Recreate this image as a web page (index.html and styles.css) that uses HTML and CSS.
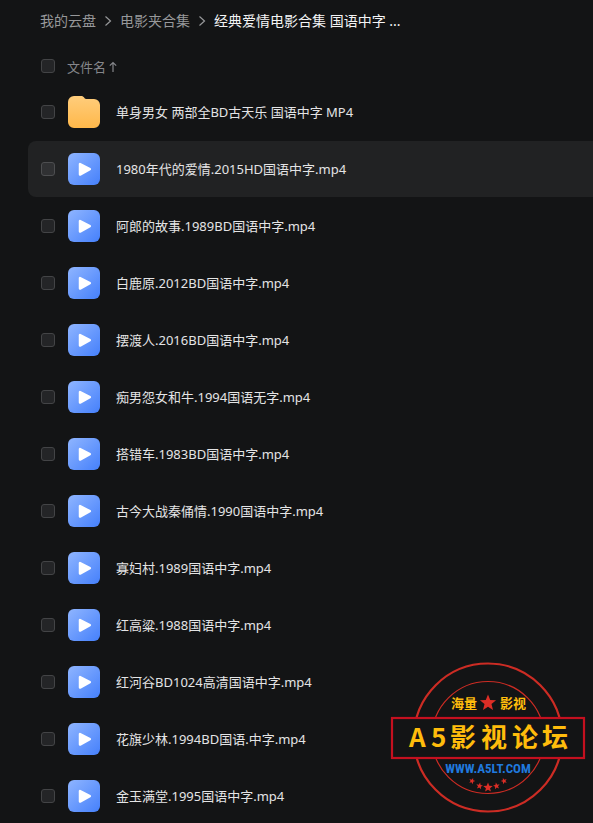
FILE: index.html
```html
<!DOCTYPE html>
<html lang="zh-CN">
<head>
<meta charset="utf-8">
<meta name="viewport" content="width=device-width, initial-scale=1">
<title>我的云盘</title>
<link rel="stylesheet" href="styles.css">
</head>
<body>
<svg class="sprite" aria-hidden="true">
  <defs>
    <linearGradient id="blue" x1="0" y1="0" x2="1" y2="1">
      <stop offset="0" stop-color="#8fb5ff"/>
      <stop offset="1" stop-color="#4580fb"/>
    </linearGradient>
    <linearGradient id="amber" x1="0" y1="0" x2="0" y2="1">
      <stop offset="0" stop-color="#ffcd7c"/>
      <stop offset="1" stop-color="#ffb84a"/>
    </linearGradient>
    <symbol id="video" viewBox="0 0 32 32">
      <rect width="32" height="32" rx="6" fill="url(#blue)"/>
      <path d="M12 11v10.600L21.800 16.200z" fill="#fff" stroke="#fff" stroke-width="2.500" stroke-linejoin="round"/>
    </symbol>
    <symbol id="folder" viewBox="0 0 32 32">
      <path d="M6 0h7c1.500 0 2.500.6 3.300 1.700C17 2.700 17.600 3 19 3h7a6 6 0 0 1 6 6v17a6 6 0 0 1-6 6H6a6 6 0 0 1-6-6V6a6 6 0 0 1 6-6z" fill="url(#amber)"/>
    </symbol>
    <symbol id="chevron" viewBox="0 0 8 12">
      <path d="M1.500 1.500L6.500 6l-5 4.500" fill="none" stroke="currentColor" stroke-width="1.200"/>
    </symbol>
    <path id="star" d="M0-10L2.600-3.400 9.500-3.100 4.100 1.300 5.900 8.100 0 4.300-5.900 8.100-4.100 1.300-9.500-3.100-2.600-3.400z"/>
  </defs>
</svg>
<main class="drive">
  <nav class="crumbs" aria-label="路径">
    <a href="#">我的云盘</a>
    <svg class="chevron" aria-hidden="true"><use href="#chevron"/></svg>
    <a href="#">电影夹合集</a>
    <svg class="chevron" aria-hidden="true"><use href="#chevron"/></svg>
    <a class="current" href="#" aria-current="page">经典爱情电影合集 国语中字 ...</a>
  </nav>
  <div class="head">
    <input type="checkbox" class="tick" aria-label="全选">
    <button type="button" class="sort">文件名
      <svg class="arrow" viewBox="0 0 8 12" aria-hidden="true"><path d="M4 11V1.500M.8 4.700L4 1.500l3.200 3.200" fill="none" stroke="currentColor" stroke-width="1.200"/></svg>
    </button>
  </div>
  <ul class="files">
    <li class="row"><input type="checkbox" class="tick" id="f1"><svg class="icon" aria-hidden="true"><use href="#folder"/></svg><label for="f1">单身男女 两部全BD古天乐 国语中字 MP4</label></li>
    <li class="row active"><input type="checkbox" class="tick" id="f2"><svg class="icon" aria-hidden="true"><use href="#video"/></svg><label for="f2">1980年代的爱情.2015HD国语中字.mp4</label></li>
    <li class="row"><input type="checkbox" class="tick" id="f3"><svg class="icon" aria-hidden="true"><use href="#video"/></svg><label for="f3">阿郎的故事.1989BD国语中字.mp4</label></li>
    <li class="row"><input type="checkbox" class="tick" id="f4"><svg class="icon" aria-hidden="true"><use href="#video"/></svg><label for="f4">白鹿原.2012BD国语中字.mp4</label></li>
    <li class="row"><input type="checkbox" class="tick" id="f5"><svg class="icon" aria-hidden="true"><use href="#video"/></svg><label for="f5">摆渡人.2016BD国语中字.mp4</label></li>
    <li class="row"><input type="checkbox" class="tick" id="f6"><svg class="icon" aria-hidden="true"><use href="#video"/></svg><label for="f6">痴男怨女和牛.1994国语无字.mp4</label></li>
    <li class="row"><input type="checkbox" class="tick" id="f7"><svg class="icon" aria-hidden="true"><use href="#video"/></svg><label for="f7">搭错车.1983BD国语中字.mp4</label></li>
    <li class="row"><input type="checkbox" class="tick" id="f8"><svg class="icon" aria-hidden="true"><use href="#video"/></svg><label for="f8">古今大战秦俑情.1990国语中字.mp4</label></li>
    <li class="row"><input type="checkbox" class="tick" id="f9"><svg class="icon" aria-hidden="true"><use href="#video"/></svg><label for="f9">寡妇村.1989国语中字.mp4</label></li>
    <li class="row"><input type="checkbox" class="tick" id="f10"><svg class="icon" aria-hidden="true"><use href="#video"/></svg><label for="f10">红高粱.1988国语中字.mp4</label></li>
    <li class="row"><input type="checkbox" class="tick" id="f11"><svg class="icon" aria-hidden="true"><use href="#video"/></svg><label for="f11">红河谷BD1024高清国语中字.mp4</label></li>
    <li class="row"><input type="checkbox" class="tick" id="f12"><svg class="icon" aria-hidden="true"><use href="#video"/></svg><label for="f12">花旗少林.1994BD国语.中字.mp4</label></li>
    <li class="row"><input type="checkbox" class="tick" id="f13"><svg class="icon" aria-hidden="true"><use href="#video"/></svg><label for="f13">金玉满堂.1995国语中字.mp4</label></li>
  </ul>
  <svg class="stamp" viewBox="0 0 196 152" role="img" aria-label="A5影视论坛">
    <circle cx="98" cy="75.500" r="74" fill="none" stroke="#cc2c24" stroke-width="2.200"/>
    <circle cx="98" cy="75.500" r="56" fill="none" stroke="#cc2c24" stroke-width="1.200"/>
    <rect x="2" y="56" width="192" height="40" fill="#131415" stroke="#c4101f" stroke-width="2.200"/>
    <g fill="#dd2e26">
      <use href="#star" transform="translate(98 41) scale(.85)"/>
      <use href="#star" transform="translate(82 119) rotate(20) scale(.33)"/>
      <use href="#star" transform="translate(89.500 124) rotate(10) scale(.35)"/>
      <use href="#star" transform="translate(98 125.500) scale(.5)"/>
      <use href="#star" transform="translate(106.500 124) rotate(-10) scale(.35)"/>
      <use href="#star" transform="translate(114 119) rotate(-20) scale(.33)"/>
    </g>
    <text class="stamp-small" x="61" y="46">海量</text>
    <text class="stamp-small" x="110" y="46">影视</text>
    <text class="stamp-title" x="19 41 60 91 122 152" y="85">A5影视论坛</text>
    <text class="stamp-url" x="98" y="111">WWW.A5LT.COM</text>
  </svg>
</main>
</body>
</html>
```
FILE: styles.css
```css
* { box-sizing: border-box; }

body {
  margin: 0;
  background: #131415;
  color: #e4e4e5;
  font: 13px/20px "Noto Sans", "Noto Sans CJK SC", sans-serif;
}

.sprite { position: absolute; width: 0; height: 0; }

.drive { position: relative; min-height: 100vh; padding-left: 28px; }

.crumbs {
  display: flex;
  align-items: center;
  gap: 8px;
  height: 42px;
  padding-left: 12px;
  font-size: 14px;
  color: #97989a;
}
.crumbs a { color: inherit; text-decoration: none; white-space: nowrap; }
.crumbs .current { color: #f4f4f5; }
.chevron { flex: none; width: 8px; height: 12px; }

.head {
  display: flex;
  align-items: center;
  gap: 12px;
  height: 42px;
  padding: 6px 13px 0;
  color: #85868a;
}

.sort {
  display: flex;
  align-items: center;
  gap: 3px;
  padding: 2px 0 0;
  border: 0;
  background: none;
  color: inherit;
  font: inherit;
}
.arrow { width: 8px; height: 12px; }

.tick {
  appearance: none;
  flex: none;
  width: 14px;
  height: 14px;
  margin: 0;
  border: 1px solid #434446;
  border-radius: 3px;
  background: #242527;
}

.files {
  display: grid;
  gap: 1px;
  margin: 0;
  padding: 0;
  list-style: none;
}

.row {
  display: flex;
  align-items: center;
  height: 56px;
  padding-left: 13px;
  border-radius: 8px 0 0 8px;
}
.row.active { background: #212223; }
.row.active .tick { background: #303133; border-color: #4d4e50; }

.icon { flex: none; width: 32px; height: 32px; margin: 0 16px 0 13px; }

.stamp {
  position: absolute;
  right: 7px;
  bottom: 10px;
  width: 196px;
  height: 152px;
}
.stamp text { font-family: "Noto Sans CJK SC", sans-serif; font-weight: 700; fill: #ffbc0c; }
.stamp .stamp-small { font-size: 13px; }
.stamp .stamp-title { font-size: 26px; }
.stamp .stamp-url {
  font-family: "Roboto Condensed", Roboto, sans-serif;
  font-size: 13px;
  fill: #2079dd;
  text-anchor: middle;
}
```
